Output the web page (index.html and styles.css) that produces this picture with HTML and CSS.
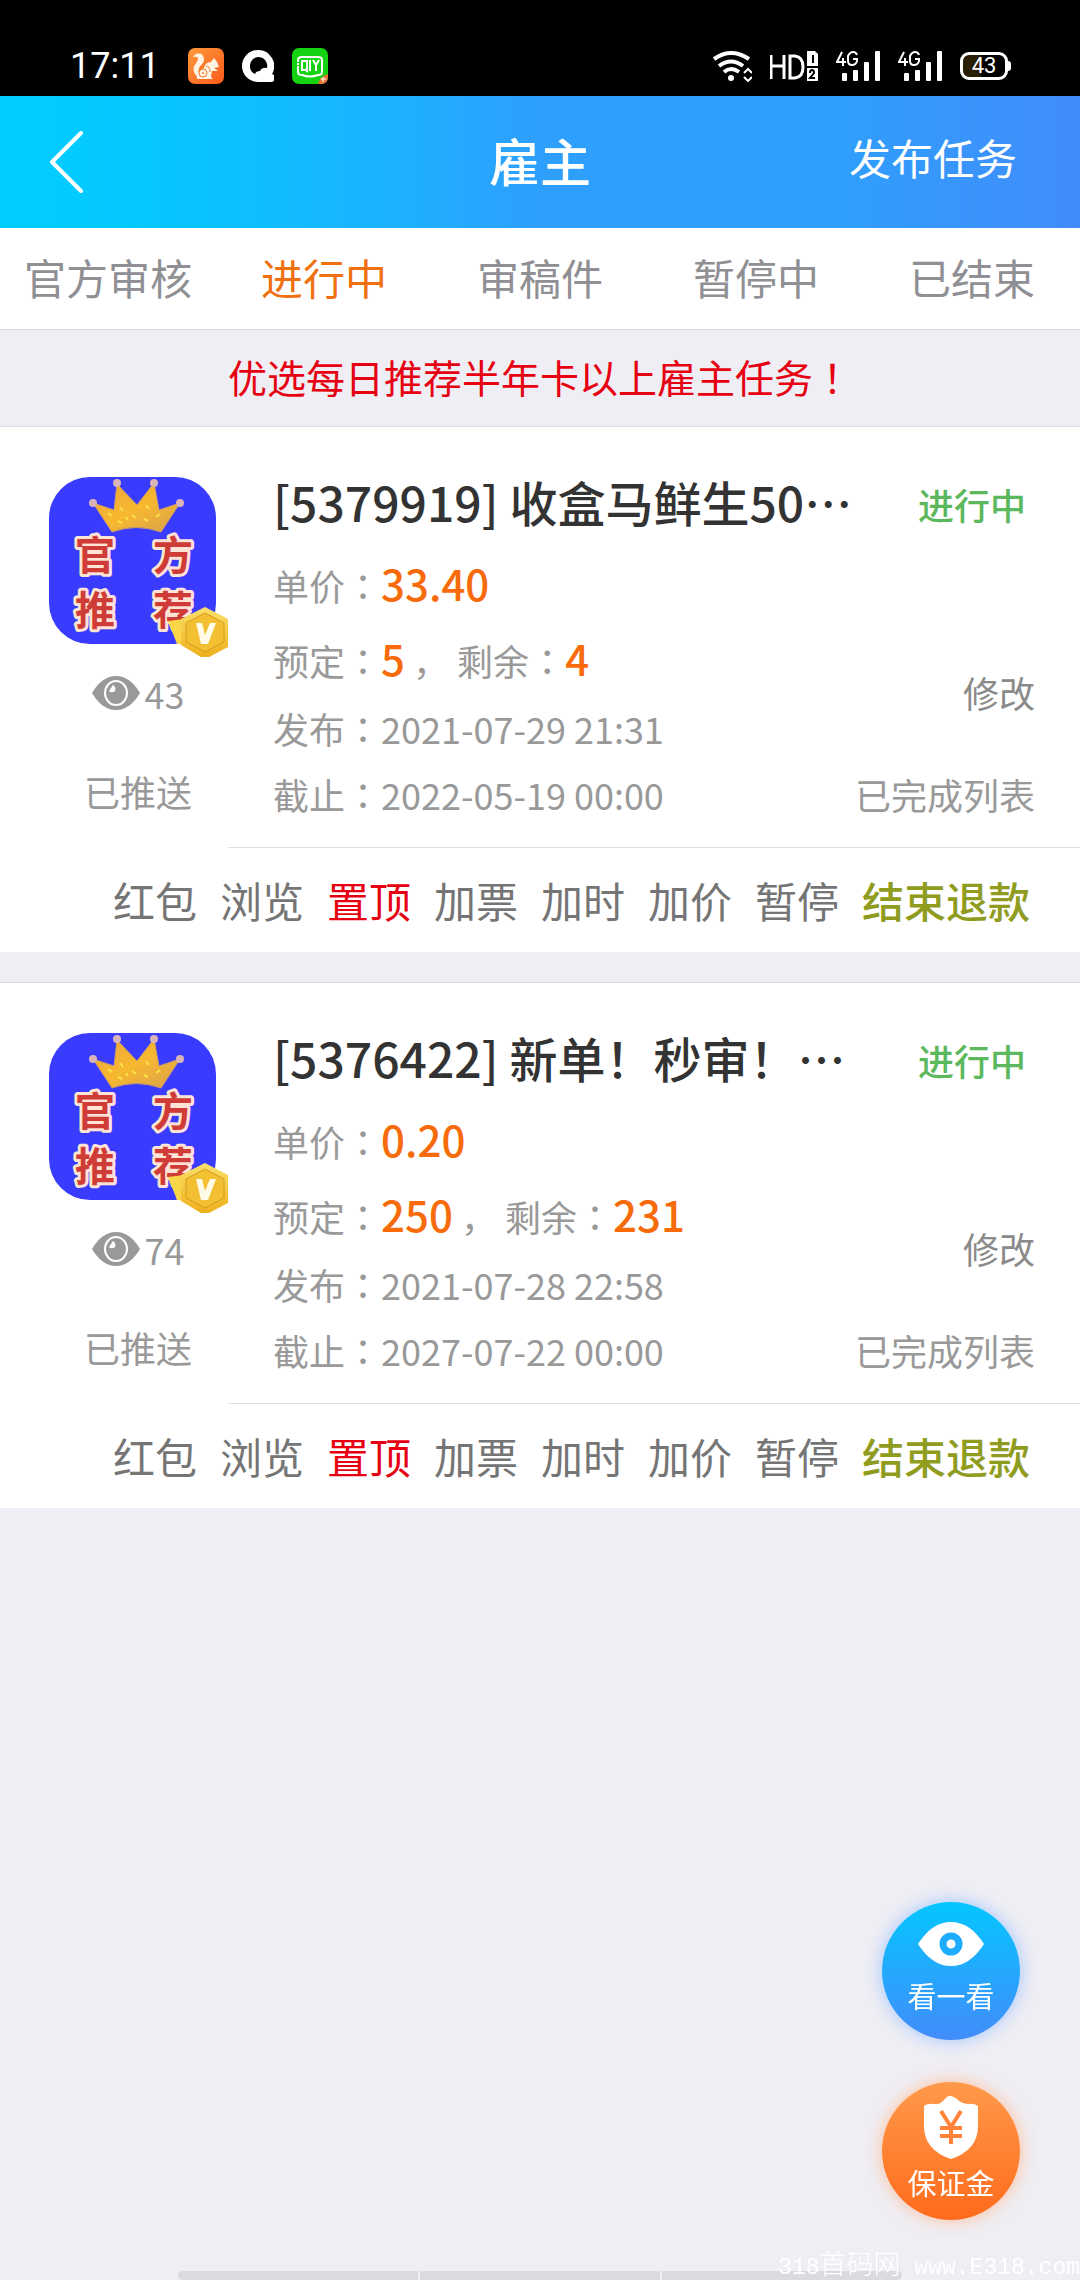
FILE: index.html
```html
<!DOCTYPE html>
<html lang="zh-CN">
<head>
<meta charset="utf-8">
<meta name="viewport" content="width=device-width, initial-scale=1">
<title>雇主</title>
<link rel="stylesheet" href="styles.css">
</head>
<body>
<svg class="defs" width="0" height="0" aria-hidden="true">
  <defs>
    <linearGradient id="gold" x1="0" y1="0" x2="0" y2="1">
      <stop offset="0" stop-color="#f9e06a"/><stop offset="1" stop-color="#efb01c"/>
    </linearGradient>
    <linearGradient id="crown" x1="0" y1="0" x2="1" y2="1">
      <stop offset="0" stop-color="#e8a53c"/><stop offset=".5" stop-color="#f7b830"/><stop offset="1" stop-color="#d9a04c"/>
    </linearGradient>
    <linearGradient id="orange" x1="0" y1="0" x2="1" y2="1">
      <stop offset="0" stop-color="#ff9a3c"/><stop offset="1" stop-color="#fb5a1a"/>
    </linearGradient>
  </defs>
  <symbol id="tile" viewBox="0 0 180 180">
    <rect x="1" y="0" width="167" height="167" rx="41" fill="#393cff"/>
    <path d="M45 26 66 33 69 7 89 28 106 6 111 33 132 26 113 55Q88 46 64 55Z" fill="url(#crown)" stroke="#c99a6a" stroke-width="1"/>
    <path d="M60 36l4 3M72 30l3 4M84 38l4 3M98 28l3 4M108 40l4-3M70 44l4 2M96 42l4 2M78 40l2 3" stroke="#ffe14a" stroke-width="2" fill="none"/>
    <g fill="#d8b3b8"><circle cx="45" cy="26" r="4"/><circle cx="69" cy="6" r="4"/><circle cx="106" cy="6" r="4"/><circle cx="132" cy="26" r="4"/></g>
  </symbol>
  <symbol id="medal" viewBox="0 0 180 180">
    <path d="M120 144 136 142 142 168 129 167Z" fill="#f8d648"/>
    <path d="M157 130 180 142V170L161 180H153L133 168V142Z" fill="url(#gold)"/>
    <path d="M157 136 176 146V165L157 175 138 165V146Z" fill="#f2c032" stroke="#d99a1c" stroke-width="1"/>
    <path d="M148 146h6l3 12 5-12h6l-8 21h-7Z" fill="#fffbe6"/>
  </symbol>
  <symbol id="views" viewBox="0 0 48 34">
    <path d="M0 17Q10 0 24 0T48 17Q38 34 24 34T0 17Z" fill="#999"/>
    <ellipse cx="24" cy="17" rx="11" ry="12" fill="#999" stroke="#fff" stroke-width="2"/>
    <path d="M17 15a4 4 0 0 0 6 0 5 5 0 0 0-2-6Z" fill="#fff"/>
  </symbol>
  <symbol id="signal" viewBox="0 0 44 31">
    <g fill="none" stroke="#fff" stroke-width="2"><path d="M6 1 1 11H10M7 7V15M21 4Q20 1 17 1T12 5V10Q12 14 16 14T21 10V8H17"/></g>
    <g fill="#fff"><rect x="6" y="22" width="5" height="8" rx="1"/><rect x="17" y="19" width="5" height="11" rx="1"/><rect x="28" y="11" width="5" height="19" rx="1"/><rect x="39" y="0" width="5" height="30" rx="1"/></g>
  </symbol>
</svg>

<div class="page">
  <div class="status">
    <div class="status-left">
      <time class="clock">17:11</time>
      <svg width="36" height="36" viewBox="0 0 36 36"><rect width="36" height="36" rx="7" fill="url(#orange)"/>
        <path d="M8 6Q15 4 16 11 16 15 12 18 9 23 12 27 15 30 20 29 15 32 10 29 4 25 6 18 10 13 10 11 10 8 5 9Q6 7 8 6Z" fill="#fff3e4"/>
        <path d="M16 20Q17 14 23 14L26 10 29 14 31 19 26 20 30 23 24 23 23 29 25 31H9Q7 25 16 20Z" fill="#fff3e4"/>
        <circle cx="15" cy="25" r="4" fill="none" stroke="#fc7a2c" stroke-width="1"/><circle cx="15" cy="25" r="1" fill="#fc7a2c"/><path d="M18 18Q22 18 22 24" fill="none" stroke="#fc7a2c" stroke-width="1"/></svg>
      <svg width="32" height="32" viewBox="0 0 32 32"><path d="M16 0A16 16 0 0 0 16 32H28A4 4 0 0 0 30 24 16 16 0 0 0 16 0Z" fill="#fff"/><path d="M16 7A9 9 0 0 0 13 24Q14 21 18 21 20 17 25 18A9 9 0 0 0 16 7Z"/></svg>
      <svg width="36" height="36" viewBox="0 0 36 36"><rect width="36" height="36" rx="7" fill="#15d313"/><path d="M36 26V29Q36 36 29 36H26Q28 28 36 26Z" fill="#e8743a"/><path d="M31 29v5M29 31h5" stroke="#fff"/>
        <path d="M6 14V12Q6 9 10 9H26Q30 9 30 12V24Q30 27 26 27 18 30 10 27 6 27 6 24V18" fill="none" stroke="#fff" stroke-width="2"/>
        <path d="M10 13H15V22H10ZM13 21 16 24M18 12V23M21 12 24 17 27 12M24 17V23M6 15v2" fill="none" stroke="#fff" stroke-width="2"/></svg>
    </div>
    <div class="status-right">
      <svg width="39" height="31" viewBox="0 0 39 31"><g fill="none" stroke="#fff" stroke-width="4"><path d="M1 8Q18-4 36 8M6 15Q18 6 30 15M11 21Q18 15 26 21"/></g><circle cx="18" cy="27" r="3" fill="#fff"/><path d="M31 22 35 18 39 22M31 26 35 30 39 26" fill="none" stroke="#fff" stroke-width="2"/></svg>
      <svg width="48" height="31" viewBox="0 0 48 31"><path d="M1 4V28M14 4V28M1 15H14M20 5V27H25Q33 26 33 16T25 5Z" fill="none" stroke="#fff" stroke-width="3"/><path d="M37 0H45L48 3V15H37ZM37 17H48V30H37Z" fill="#fff"/><path d="M43 4V12M40 22Q40 19 42 19T44 22L40 27H45" fill="none" stroke="#000" stroke-width="2"/></svg>
      <svg width="44" height="31"><use href="#signal"/></svg>
      <svg width="44" height="31"><use href="#signal"/></svg>
      <span class="battery">43</span>
    </div>
  </div>

  <header class="header">
    <a class="back" href="#" aria-label="返回"><svg width="34" height="62" viewBox="0 0 34 62"><path d="M31 2 2 31 31 60" fill="none" stroke="#fff" stroke-width="4" stroke-linecap="round" stroke-linejoin="round"/></svg></a>
    <h1 class="header-title">雇主</h1>
    <a class="publish" href="#">发布任务</a>
  </header>

  <nav class="tabs">
    <a href="#">官方审核</a>
    <a class="active" href="#" aria-current="page">进行中</a>
    <a href="#">审稿件</a>
    <a href="#">暂停中</a>
    <a href="#">已结束</a>
  </nav>

  <p class="notice">优选每日推荐半年卡以上雇主任务<span class="mid" lang="zh-TW">！</span></p>

  <main class="list">
    <article class="card">
      <div class="media">
        <svg width="180" height="180" viewBox="0 0 180 180">
          <use href="#tile"/>
          <g class="thumb-text"><text x="27" y="93">官</text><text x="105" y="93">方</text><text x="27" y="148">推</text><text x="105" y="148">荐</text></g>
          <use href="#medal"/>
        </svg>
        <div class="views"><svg width="48" height="34"><use href="#views"/></svg>43</div>
        <div class="pushed">已推送</div>
      </div>
      <div class="info">
        <h2 class="title">[5379919] 收盒马鲜生50…</h2>
        <p class="amount">单价<span class="mid" lang="zh-TW">：</span><b>33.40</b></p>
        <p class="amount">预定<span class="mid" lang="zh-TW">：</span><b>5</b> ， 剩余<span class="mid" lang="zh-TW">：</span><b>4</b></p>
        <p class="date">发布<span class="mid" lang="zh-TW">：</span>2021-07-29 21:31</p>
        <p class="date">截止<span class="mid" lang="zh-TW">：</span>2022-05-19 00:00</p>
      </div>
      <div class="side">
        <span class="state">进行中</span>
        <a class="edit" href="#">修改</a>
        <a href="#">已完成列表</a>
      </div>
      <div class="actions">
        <button type="button">红包</button>
        <button type="button">浏览</button>
        <button type="button" class="pin">置顶</button>
        <button type="button">加票</button>
        <button type="button">加时</button>
        <button type="button">加价</button>
        <button type="button">暂停</button>
        <button type="button" class="refund">结束退款</button>
      </div>
    </article>

    <article class="card">
      <div class="media">
        <svg width="180" height="180" viewBox="0 0 180 180">
          <use href="#tile"/>
          <g class="thumb-text"><text x="27" y="93">官</text><text x="105" y="93">方</text><text x="27" y="148">推</text><text x="105" y="148">荐</text></g>
          <use href="#medal"/>
        </svg>
        <div class="views"><svg width="48" height="34"><use href="#views"/></svg>74</div>
        <div class="pushed">已推送</div>
      </div>
      <div class="info">
        <h2 class="title">[5376422] 新单！秒审！…</h2>
        <p class="amount">单价<span class="mid" lang="zh-TW">：</span><b>0.20</b></p>
        <p class="amount">预定<span class="mid" lang="zh-TW">：</span><b>250</b> ， 剩余<span class="mid" lang="zh-TW">：</span><b>231</b></p>
        <p class="date">发布<span class="mid" lang="zh-TW">：</span>2021-07-28 22:58</p>
        <p class="date">截止<span class="mid" lang="zh-TW">：</span>2027-07-22 00:00</p>
      </div>
      <div class="side">
        <span class="state">进行中</span>
        <a class="edit" href="#">修改</a>
        <a href="#">已完成列表</a>
      </div>
      <div class="actions">
        <button type="button">红包</button>
        <button type="button">浏览</button>
        <button type="button" class="pin">置顶</button>
        <button type="button">加票</button>
        <button type="button">加时</button>
        <button type="button">加价</button>
        <button type="button">暂停</button>
        <button type="button" class="refund">结束退款</button>
      </div>
    </article>
  </main>

  <div class="floats">
    <button type="button" class="fab look">
      <svg width="66" height="44" viewBox="0 0 66 44"><path d="M0 22Q14 0 33 0T66 22Q52 44 33 44T0 22Z" fill="#fff"/><circle cx="33" cy="22" r="8" fill="none" stroke="#1fabff" stroke-width="7"/></svg>
      <span>看一看</span>
    </button>
    <button type="button" class="fab deposit">
      <svg width="54" height="63" viewBox="0 0 54 63"><path d="M27 0Q31 1 34 4T44 8Q50 7 54 10V30Q54 54 27 63 0 54 0 30V10Q4 7 10 8T20 4 27 0Z" fill="#fff"/><path d="M17 15 27 31 37 15M27 31V48M16 32H38M16 40H38" fill="none" stroke="#ff8338" stroke-width="4"/></svg>
      <span>保证金</span>
    </button>
  </div>

  <div class="home-bar"><i></i><i></i><i></i></div>
  <div class="watermark">318<span>首码网</span> www.E318.com</div>
</div>
</body>
</html>
```
FILE: styles.css
```css
* { box-sizing: border-box; }

body {
  margin: 0;
  background: #efeef4;
  color: #999;
  font: 36px/54px "Noto Sans CJK SC", sans-serif;
}

h1, h2, p { margin: 0; font-weight: inherit; }
a { color: inherit; text-decoration: none; }
button { padding: 0; border: 0; background: none; font: inherit; color: inherit; cursor: pointer; }
svg { display: block; flex: none; }
.defs { position: absolute; }

.page { position: relative; min-height: 100vh; overflow: hidden; }

/* Full-width punctuation centred in its cell */
.mid { font-family: "Noto Sans CJK TC", sans-serif; }

/* Phone status bar */
.status {
  display: flex;
  justify-content: space-between;
  height: 96px;
  padding: 36px 72px 0 70px;
  background: #000;
  color: #fff;
}
.status-left, .status-right { display: flex; align-items: center; gap: 18px; height: 60px; }
.clock { margin-right: 10px; font-family: Roboto, sans-serif; }
.battery {
  position: relative;
  width: 48px;
  height: 28px;
  border: 3px solid #fff;
  border-radius: 9px;
  background: linear-gradient(90deg, #2a1d05 43%, #000 43%);
  font: 22px/22px Roboto, sans-serif;
  text-align: center;
}
.battery::after {
  content: "";
  position: absolute;
  top: 6px;
  right: -6px;
  width: 3px;
  height: 10px;
  border-radius: 0 3px 3px 0;
  background: #fff;
}

/* Title bar */
.header {
  display: grid;
  grid-template-columns: 1fr auto 1fr;
  align-items: center;
  height: 132px;
  padding: 0 50px;
  background: linear-gradient(90deg, #00ceff, #06c6ff 14%, #0fbeff 24%, #1cb2ff 36%, #2e9ffd 50%, #2f9efc 78%, #428cfa);
  color: #fff;
}
.header-title { padding-bottom: 4px; font-size: 51px; font-weight: 500; }
.publish { justify-self: end; padding: 0 13px 10px 0; font-size: 42px; }

/* Tabs */
.tabs {
  display: grid;
  grid-template-columns: repeat(5, 1fr);
  padding-bottom: 4px;
  border-bottom: 1px solid #dedde2;
  background: #fff;
  color: #8f8f94;
  font-size: 42px;
  line-height: 97px;
  text-align: center;
}
.tabs .active { color: #f07010; }

.notice { padding-bottom: 4px; color: #e60012; font-size: 39px; line-height: 92px; text-align: center; }

/* Task cards */
.list { display: grid; gap: 30px; }
.card {
  display: grid;
  grid-template-columns: 228px minmax(0, 1fr) 180px;
  padding-right: 45px;
  border-top: 1px solid #dedde2;
  background: #fff;
}
.media { padding: 50px 0 0 48px; text-align: center; }
.views { display: flex; align-items: center; justify-content: center; gap: 5px; margin-top: 9px; }
.pushed { margin-top: 44px; }

.info { padding: 30px 0 20px 45px; white-space: nowrap; }
.title {
  overflow: hidden;
  color: #333;
  font-size: 48px;
  font-weight: 500;
  line-height: 88px;
  text-overflow: ellipsis;
}
.amount { height: 75px; line-height: 75px; }
.amount b { color: #f76b0b; font-size: 42px; font-weight: 500; }
.date { height: 66px; line-height: 66px; }

.side { display: flex; flex-direction: column; align-items: flex-end; padding-top: 50px; white-space: nowrap; }
.state { padding-right: 9px; color: #5cb85c; font-weight: 500; }
.edit { margin: 134px 0 48px; color: #8a8a8a; }

.actions {
  display: flex;
  grid-column: 2 / -1;
  justify-content: flex-end;
  gap: 23px;
  margin-right: -45px;
  padding-right: 50px;
  border-top: 1px solid #e0e0e2;
  color: #757575;
  font-size: 42px;
  line-height: 104px;
  white-space: nowrap;
}
.pin { color: #e60012; }
.refund { color: #8f9c20; font-weight: 500; }

/* Floating shortcuts */
.floats { position: fixed; right: 60px; bottom: 60px; display: grid; gap: 42px; }
.fab {
  display: flex;
  flex-direction: column;
  align-items: center;
  width: 138px;
  height: 138px;
  border-radius: 50%;
  color: #fff;
  font-size: 29px;
  line-height: 40px;
}
.look { gap: 9px; padding-top: 20px; background: linear-gradient(#04c6ff, #428cfa); box-shadow: 0 0 18px #9fc4ff; }
.deposit { gap: 3px; padding-top: 14px; background: linear-gradient(#ff9a4a, #ff6a1c); box-shadow: 0 0 18px #ffbf9a; }

/* Navigation hint and site mark */
.home-bar {
  position: fixed;
  right: 178px;
  bottom: 0;
  left: 178px;
  display: grid;
  grid-template-columns: repeat(3, 1fr);
  gap: 2px;
  height: 9px;
  overflow: hidden;
  border-radius: 6px;
}
.home-bar i { background: #dbdae0; }
.watermark {
  position: fixed;
  right: 0;
  bottom: 0;
  color: #fff;
  font: 23px/24px "Liberation Mono", monospace;
}
.watermark span { font: 300 27px/24px "Noto Sans CJK SC", sans-serif; }

.thumb-text {
  fill: #cf3b36;
  stroke: #ffe3d6;
  stroke-width: 6px;
  stroke-linejoin: round;
  paint-order: stroke;
  font: 700 40px "Noto Sans CJK SC", sans-serif;
}
```
